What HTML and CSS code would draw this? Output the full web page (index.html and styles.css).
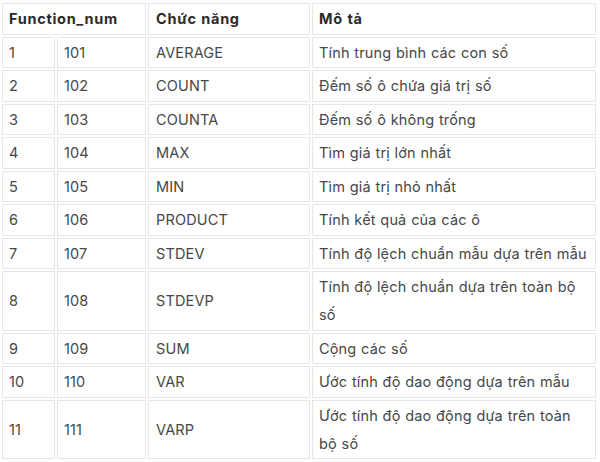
FILE: index.html
```html
<!DOCTYPE html>
<html lang="vi">
<head>
<meta charset="utf-8">
<link rel="stylesheet" href="styles.css">
</head>
<body>
<table class="fn-table">
  <colgroup>
    <col class="c1"><col class="c2"><col class="c3"><col class="c4">
  </colgroup>
  <thead>
    <tr><th colspan="2">Function_num</th><th>Chức năng</th><th>Mô tả</th></tr>
  </thead>
  <tbody>
    <tr><td>1</td><td>101</td><td>AVERAGE</td><td>Tính trung bình các con số</td></tr>
    <tr><td>2</td><td>102</td><td>COUNT</td><td>Đếm số ô chứa giá trị số</td></tr>
    <tr><td>3</td><td>103</td><td>COUNTA</td><td>Đếm số ô không trống</td></tr>
    <tr><td>4</td><td>104</td><td>MAX</td><td>Tìm giá trị lớn nhất</td></tr>
    <tr><td>5</td><td>105</td><td>MIN</td><td>Tìm giá trị nhỏ nhất</td></tr>
    <tr><td>6</td><td>106</td><td>PRODUCT</td><td>Tính kết quả của các ô</td></tr>
    <tr><td>7</td><td>107</td><td>STDEV</td><td class="nw">Tính độ lệch chuẩn mẫu dựa trên mẫu</td></tr>
    <tr><td>8</td><td>108</td><td>STDEVP</td><td>Tính độ lệch chuẩn dựa trên toàn bộ số</td></tr>
    <tr><td>9</td><td>109</td><td>SUM</td><td>Cộng các số</td></tr>
    <tr><td>10</td><td>110</td><td>VAR</td><td>Ước tính độ dao động dựa trên mẫu</td></tr>
    <tr><td>11</td><td>111</td><td>VARP</td><td>Ước tính độ dao động dựa trên toàn bộ số</td></tr>
  </tbody>
</table>
</body>
</html>
```
FILE: styles.css
```css
html, body {
  margin: 0;
  padding: 0;
  background: #ffffff;
}
body {
  padding: 1px 0 0 0;
  font-family: Inter, "Noto Sans", "Liberation Sans", sans-serif;
}
.fn-table {
  width: 598px;
  border-collapse: separate;
  border-spacing: 2px;
  table-layout: fixed;
  font-size: 14.5px;
  letter-spacing: 0.15px;
  word-spacing: 0.5px;
  color: #474747;
}
.c1 { width: 53px; }
.c2 { width: 89px; }
.c3 { width: 162px; }
.c4 { width: 284px; }
.fn-table th,
.fn-table td {
  border: 1px solid #e6e6e6;
  padding: 1px 6px 0.5px;
  line-height: 28px;
  text-align: left;
  vertical-align: middle;
}
.fn-table th {
  font-weight: 700;
  color: #2b2b2b;
  letter-spacing: 0.7px;
}
.fn-table td:nth-child(3),
.fn-table th:nth-child(2) {
  padding-left: 7px;
}
.fn-table td:nth-child(4) {
  padding-right: 2px;
}
.fn-table .nw {
  white-space: nowrap;
}
```
